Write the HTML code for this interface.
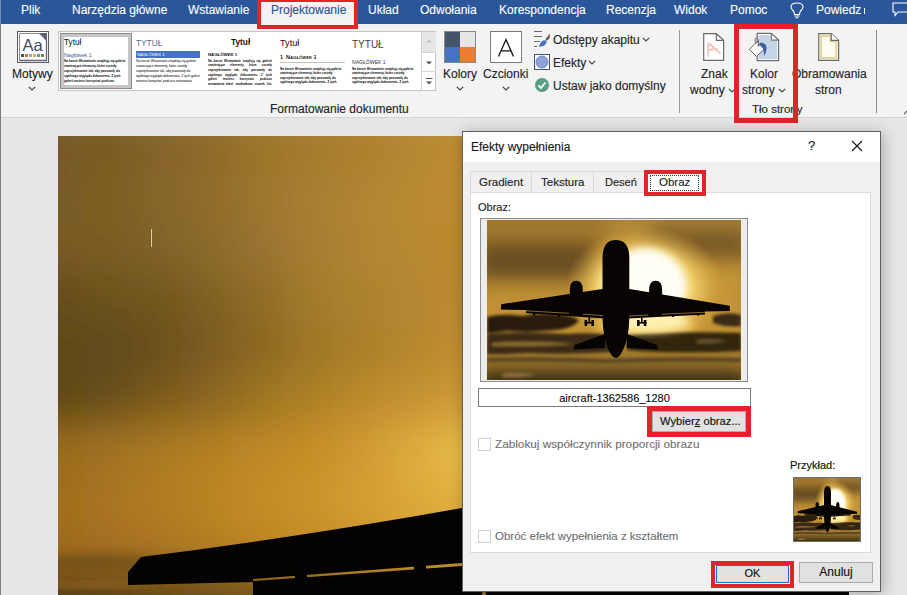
<!DOCTYPE html>
<html><head><meta charset="utf-8">
<style>
*{box-sizing:border-box;margin:0;padding:0}
html,body{width:907px;height:595px;overflow:hidden}
body{position:relative;background:#e6e6e6;font-family:"Liberation Sans",sans-serif;font-size:12px;color:#262626}
.a{position:absolute;white-space:nowrap}
.t{position:absolute;white-space:nowrap;font-size:12px;line-height:14px;-webkit-text-stroke:0.15px currentColor}
#tabs{left:0;top:0;width:907px;height:24px;background:#2b579a}
.tab{position:absolute;top:3px;color:#fff;font-size:12px;line-height:14px;-webkit-text-stroke:0.1px currentColor}
#ribbon{left:0;top:24px;width:907px;height:94px;background:#f3f3f3;border-bottom:1px solid #d4d4d4}
#leftline{left:0;top:0;width:1px;height:595px;background:#7d7d7d}
#page{left:58px;top:136px;width:791px;height:459px;overflow:hidden}
#dlg{left:462px;top:131px;width:419px;height:461px;background:#f0f0f0;border:1px solid #5f5f5f;box-shadow:2px 2px 14px rgba(0,0,0,.28)}
.red{position:absolute;border:5px solid #e0242a}
</style></head><body>
<svg width="0" height="0" style="position:absolute">
<defs>
  <filter id="pb4" x="-30%" y="-30%" width="160%" height="160%"><feGaussianBlur stdDeviation="4"/></filter>
  <filter id="pb2" x="-30%" y="-30%" width="160%" height="160%"><feGaussianBlur stdDeviation="1.6"/></filter>
  <filter id="pb8" x="-30%" y="-30%" width="160%" height="160%"><feGaussianBlur stdDeviation="9"/></filter>
  <radialGradient id="sun" cx="0.5" cy="0.5" r="0.5">
    <stop offset="0" stop-color="#ffffff"/>
    <stop offset="0.35" stop-color="#fff8e0"/>
    <stop offset="0.6" stop-color="#f0cf6a"/>
    <stop offset="1" stop-color="#d8a43a" stop-opacity="0"/>
  </radialGradient>
  <symbol id="photo" viewBox="0 0 254 160" preserveAspectRatio="none">
    <rect width="254" height="160" fill="#a87c2a"/>
    <g filter="url(#pb8)">
      <rect x="-10" y="-10" width="130" height="22" fill="#9c7630"/>
      <rect x="120" y="-10" width="60" height="35" fill="#b08838"/>
      <rect x="170" y="-10" width="90" height="22" fill="#a07c34"/>
      <rect x="160" y="10" width="100" height="30" fill="#7a5a26"/>
      <rect x="-10" y="22" width="120" height="38" fill="#6a5020"/>
      <rect x="-10" y="66" width="110" height="28" fill="#c09034"/>
      <rect x="195" y="45" width="65" height="50" fill="#c49638"/>
      <rect x="-10" y="92" width="270" height="26" fill="#c49436"/>
      <rect x="-10" y="132" width="270" height="14" fill="#a07a32"/>
      <rect x="-10" y="148" width="270" height="24" fill="#2c2010"/>
    </g>
    <ellipse cx="158" cy="68" rx="80" ry="62" fill="url(#sun)"/>
    <ellipse cx="158" cy="66" rx="40" ry="38" fill="#fffef6" filter="url(#pb4)"/>
    <ellipse cx="160" cy="106" rx="50" ry="8" fill="#f0c860" filter="url(#pb4)"/>
    <g filter="url(#pb2)">
      <path d="M0 97 Q15 93 35 96 Q55 92 75 95 Q88 96 92 101 Q86 108 70 110 Q40 113 20 111 Q8 113 0 113Z" fill="#2a1d0c"/>
      <path d="M0 114 Q40 111 80 114 Q110 112 125 116 L125 132 Q80 135 40 133 Q15 135 0 134Z" fill="#3a2a12"/>
      <path d="M140 115 Q190 111 254 113 L254 131 Q200 134 150 131 L140 130Z" fill="#33250f"/>
      <path d="M5 123 Q40 120 90 124 Q50 127 5 126Z" fill="#8a6a30"/>
      <path d="M210 120 Q225 118 240 121 Q225 124 210 123Z" fill="#6a5430"/>
      <path d="M0 138 Q60 136 120 139 Q190 136 254 138 L254 142 Q180 141 120 143 Q60 141 0 142Z" fill="#5a4420"/>
      <path d="M226 96 Q240 91 254 95 L254 106 Q240 108 226 103Z" fill="#3a2a12"/>
      <path d="M15 154 Q30 151 50 155 Q30 158 15 157Z" fill="#8a7040"/>
    </g>
    <ellipse cx="160" cy="101" rx="42" ry="11" fill="#fff0b0" filter="url(#pb4)"/>
    <!-- plane -->
    <g fill="#070403">
      <path d="M115.5 38 Q115.5 20 128.9 20 Q142.3 20 142.3 38 L142.3 98 Q142 118 136 130 Q132.5 137.5 128.9 138 Q125 137.5 121.5 130 Q116 118 115.5 98 Z"/>
      <path d="M117 68.7 L14.2 84.2 L13.8 89.5 L39 90 L39 93 L117 98.5 Z"/>
      <path d="M141 68.7 L242.7 85.7 L243 91 L218 91.5 L218 94.5 L141 98.5 Z"/>
      <path d="M82.8 70 Q82.8 60.8 89.3 60.8 Q95.8 60.8 95.8 70 L95.8 91 L82.8 91 Z"/>
      <path d="M162.1 70 Q162.1 60.8 168.6 60.8 Q175.1 60.8 175.1 70 L175.1 91 L162.1 91 Z"/>
      <path d="M118 114 L87.5 125 L86.8 129.5 L118 128 Z"/>
      <path d="M139.8 114 L170.3 125 L171 129.5 L139.8 128 Z"/>
      <rect x="101.5" y="95" width="1.6" height="8"/><rect x="97.6" y="100" width="2.6" height="6"/><rect x="104.4" y="100" width="2.6" height="6"/><rect x="97.6" y="102" width="9.4" height="1.6"/>
      <rect x="154" y="95" width="1.6" height="8"/><rect x="150" y="100" width="2.6" height="6"/><rect x="156.8" y="100" width="2.6" height="6"/><rect x="150" y="102" width="9.4" height="1.6"/>
      <rect x="46" y="89" width="2.2" height="6.5"/><rect x="71" y="91" width="2.2" height="6"/>
      <rect x="185" y="91" width="2.2" height="6"/><rect x="210" y="89" width="2.2" height="6.5"/>
    </g>
    <path d="M39 90.8 L82 93.3 M96 94.2 L116 95.6 M218 92.3 L175 94.2 M161 95 L142 96" stroke="#b89048" stroke-width="0.7" fill="none"/>
  </symbol>
</defs>
</svg>
<div id="tabs" class="a">
  <span class="tab" style="left:21px">Plik</span>
  <span class="tab" style="left:72px">Narzędzia główne</span>
  <span class="tab" style="left:188px">Wstawianie</span>
  <span class="tab" style="left:368px">Układ</span>
  <span class="tab" style="left:420px">Odwołania</span>
  <span class="tab" style="left:499px">Korespondencja</span>
  <span class="tab" style="left:606px">Recenzja</span>
  <span class="tab" style="left:674px">Widok</span>
  <span class="tab" style="left:730px">Pomoc</span>
  <span class="tab" style="left:816px">Powiedz</span>
</div>
<div id="ribbon" class="a"></div>
<!-- selected tab -->
<div class="a" style="left:258px;top:0;width:100px;height:29px;background:#f3f3f3"></div>
<span class="t" style="left:271px;top:3px;color:#2b579a">Projektowanie</span>
<div class="red" style="left:257px;top:-2px;width:101px;height:31px;border-width:4.5px"></div>
<!-- Motywy -->
<svg class="a" style="left:17px;top:31px" width="32" height="32" viewBox="0 0 32 32">
  <rect x="0.5" y="0.5" width="31" height="31" fill="#fff" stroke="#5c5c5c"/>
  <path d="M2.5 2.5 H22 L29.5 9.5 V29.5 H2.5 Z" fill="#fff" stroke="#8c8c8c"/>
  <path d="M22 2 H30 V10 Z" fill="#5a6078"/>
  <path d="M29.5 9 V29.5 H2.5" fill="none" stroke="#5f6478" stroke-width="1.3"/>
  <text x="5.5" y="20" font-family="Liberation Sans" font-size="16.5" fill="#44495a">Aa</text>
  <rect x="4" y="23" width="3" height="3" fill="#44546a"/><rect x="8" y="23" width="3" height="3" fill="#c57a45"/>
  <rect x="12" y="23" width="3" height="3" fill="#a5a5a5"/><rect x="16" y="23" width="3" height="3" fill="#d4b050"/>
  <rect x="20" y="23" width="3" height="3" fill="#6f8fc0"/><rect x="24" y="23" width="3" height="3" fill="#6b8a50"/>
</svg>
<span class="t" style="left:12px;top:67px">Motywy</span>
<svg class="a" style="left:28px;top:86px" width="8" height="5"><path d="M0.8 0.8 L4 4 L7.2 0.8" fill="none" stroke="#444" stroke-width="1.2"/></svg>
<!-- gallery -->
<div class="a" style="left:58px;top:31px;width:378px;height:60px;background:#fff;border:1px solid #c6c6c6"></div>
<div class="a" style="left:60px;top:33px;width:72px;height:56px;border:1px solid #8a8a8a;background:#fff"></div>
<div class="a" style="left:61px;top:34px;width:70px;height:54px;border:3px solid #c6c6c6"></div>
<div class="a" style="left:421px;top:32px;width:15px;height:20px;background:#e6e6e6;border-left:1px solid #d6d6d6"></div>
<div class="a" style="left:421px;top:52px;width:15px;height:38px;border-left:1px solid #d6d6d6"></div>
<div class="a" style="left:421px;top:71px;width:15px;height:1px;background:#d6d6d6"></div>
<div class="a" style="left:421px;top:52px;width:15px;height:1px;background:#d6d6d6"></div>
<svg class="a" style="left:425px;top:38px" width="8" height="6"><path d="M1 4.5 L4 1.5 L7 4.5Z" fill="#c4c4c4"/></svg>
<svg class="a" style="left:425px;top:60px" width="8" height="6"><path d="M1 1.5 L4 4.5 L7 1.5Z" fill="#555"/></svg>
<svg class="a" style="left:425px;top:77px" width="8" height="10"><rect x="0.5" y="1" width="7" height="1" fill="#555"/><path d="M1 4.5 L4 7.5 L7 4.5Z" fill="#555"/></svg>

<span class="a" style="left:64px;top:38.5px;font-size:8.2px;line-height:8.2px;color:#111">Tytuł</span>
<span class="a" style="left:64px;top:52.5px;font-size:5.3px;line-height:5.3px;color:#3c5a8c">Nagłówek 1</span>
<div class="a" style="left:64px;top:59px;width:63px;height:25px;overflow:hidden;white-space:normal;font-size:3.3px;line-height:4.9px;font-weight:bold;letter-spacing:-0.08px;color:#111;">Na karcie Wstawianie znajdują się galerie zawierające elementy, które zostały zaprojektowane tak, aby pasowały do ogólnego wyglądu dokumentu. Z tych galerii możesz korzystać podczas wstawiania tabel, nagłówków, stopek, list, stron tytułowych</div>
<span class="a" style="left:136px;top:39px;font-size:8.3px;line-height:8.3px;color:#5a6a88">TYTUŁ</span>
<div class="a" style="left:136px;top:51px;width:64px;height:7px;background:#4472c4"></div>
<span class="a" style="left:137px;top:52.5px;font-size:4.2px;line-height:4.2px;color:#fff">NAGŁÓWEK 1</span>
<div class="a" style="left:136px;top:59px;width:64px;height:25px;overflow:hidden;white-space:normal;font-size:3.4px;line-height:4.9px;font-weight:normal;letter-spacing:-0.06px;color:#000;">Na karcie Wstawianie znajdują się galerie zawierające elementy, które zostały zaprojektowane tak, aby pasowały do ogólnego wyglądu dokumentu. Z tych galerii możesz korzystać podczas wstawiania tabel, nagłówków, stopek, list, stron tytułowych</div>
<span class="a" style="left:231px;top:38px;font-size:8.3px;line-height:8.3px;font-weight:bold;color:#111">Tytuł</span>
<span class="a" style="left:208px;top:53px;font-size:4.3px;line-height:4.3px;font-weight:bold;color:#111">NAGŁÓWEK 1</span>
<div class="a" style="left:208px;top:58.5px;width:64px;height:26px;overflow:hidden;white-space:normal;font-size:3.2px;line-height:4.7px;font-weight:bold;letter-spacing:-0.06px;color:#111;text-align:justify;">Na karcie Wstawianie znajdują się galerie zawierające elementy, które zostały zaprojektowane tak, aby pasowały do ogólnego wyglądu dokumentu. Z tych galerii możesz korzystać podczas wstawiania tabel, nagłówków, stopek, list, stron tytułowych</div>
<span class="a" style="left:280px;top:38.5px;font-size:9.2px;line-height:9.2px;color:#111">Tytuł</span>
<span class="a" style="left:280px;top:55px;font-size:5.5px;line-height:5.5px;font-weight:bold;color:#222">1&nbsp;&nbsp;N<span style="font-size:4.2px">AGŁÓWEK</span> 1</span>
<div class="a" style="left:280px;top:62px;width:65px;height:1px;background:#c0c0c0"></div>
<div class="a" style="left:280px;top:66.5px;width:64px;height:18px;overflow:hidden;white-space:normal;font-size:3.3px;line-height:4.6px;font-weight:bold;letter-spacing:-0.08px;color:#111;">Na karcie Wstawianie znajdują się galerie zawierające elementy, które zostały zaprojektowane tak, aby pasowały do ogólnego wyglądu dokumentu. Z tych galerii możesz korzystać podczas wstawiania tabel, nagłówków, stopek, list, stron tytułowych</div>
<span class="a" style="left:352px;top:39.5px;font-size:10px;line-height:10px;color:#404040">TYTUŁ</span>
<span class="a" style="left:352px;top:60px;font-size:5.1px;line-height:5.1px;color:#333">NAGŁÓWEK 1</span>
<div class="a" style="left:352px;top:66.5px;width:63px;height:18.4px;overflow:hidden;white-space:normal;font-size:3.3px;line-height:4.6px;font-weight:bold;letter-spacing:-0.08px;color:#111;">Na karcie Wstawianie znajdują się galerie zawierające elementy, które zostały zaprojektowane tak, aby pasowały do ogólnego wyglądu dokumentu. Z tych galerii możesz korzystać podczas wstawiania tabel, nagłówków, stopek, list, stron tytułowych</div>

<span class="t" style="left:270px;top:102px">Formatowanie dokumentu</span>
<!-- Kolory -->
<svg class="a" style="left:444px;top:31px" width="32" height="32" viewBox="0 0 32 32">
  <rect x="0" y="0" width="16" height="16" fill="#44546a"/><rect x="16" y="0" width="16" height="16" fill="#e7e6e6"/>
  <rect x="0" y="16" width="16" height="16" fill="#4472c4"/><rect x="16" y="16" width="16" height="16" fill="#ed7d31"/>
  <rect x="0.5" y="0.5" width="31" height="31" fill="none" stroke="#8a8a8a"/>
</svg>
<span class="t" style="left:443px;top:67px">Kolory</span>
<svg class="a" style="left:456px;top:86px" width="8" height="5"><path d="M0.8 0.8 L4 4 L7.2 0.8" fill="none" stroke="#444" stroke-width="1.2"/></svg>
<!-- Czcionki -->
<div class="a" style="left:490px;top:31px;width:32px;height:32px;background:#fff;border:1px solid #7a7a7a"></div>
<svg class="a" style="left:490px;top:31px" width="32" height="32" viewBox="0 0 32 32"><path d="M8.5 25.5 L16 8.5 L23.5 25.5 M11 19.8 H21" fill="none" stroke="#111" stroke-width="1.3"/></svg>
<span class="t" style="left:483px;top:67px">Czcionki</span>
<svg class="a" style="left:502px;top:86px" width="8" height="5"><path d="M0.8 0.8 L4 4 L7.2 0.8" fill="none" stroke="#444" stroke-width="1.2"/></svg>
<!-- Odstepy / Efekty / Ustaw -->
<svg class="a" style="left:533px;top:29px" width="18" height="20" viewBox="0 0 18 20">
  <rect x="1" y="2" width="8" height="1" fill="#6a6a6a"/><rect x="1" y="7" width="8" height="1" fill="#6a6a6a"/>
  <rect x="1" y="12" width="6" height="1" fill="#6a6a6a"/><rect x="1" y="17" width="3" height="1" fill="#6a6a6a"/>
  <path d="M12.5 10 L17 4.5 L16.5 9.5 L13.5 12 Z" fill="#5e5e5e"/>
  <path d="M6 18 Q7 13 10 11.5 Q13 10.5 13.5 12.5 Q13.5 15.5 10 17 Z" fill="#4a6fc0"/>
</svg>
<span class="t" style="left:553px;top:33px">Odstępy akapitu</span>
<svg class="a" style="left:642px;top:37px" width="8" height="5"><path d="M0.8 0.8 L4 4 L7.2 0.8" fill="none" stroke="#444" stroke-width="1.2"/></svg>
<svg class="a" style="left:534px;top:54px" width="16" height="16" viewBox="0 0 16 16">
  <rect x="0.5" y="0.5" width="15" height="15" fill="#fff" stroke="#44546a"/>
  <circle cx="8" cy="8" r="6" fill="#8fa3d8" stroke="#5a78c0" stroke-width="0.8"/>
</svg>
<span class="t" style="left:553px;top:56px">Efekty</span>
<svg class="a" style="left:588px;top:60px" width="8" height="5"><path d="M0.8 0.8 L4 4 L7.2 0.8" fill="none" stroke="#444" stroke-width="1.2"/></svg>
<svg class="a" style="left:534px;top:77px" width="16" height="16" viewBox="0 0 16 16">
  <circle cx="8" cy="8" r="7" fill="#5a9e83"/>
  <path d="M4.5 8.5 L7 11 L11.5 5.5" fill="none" stroke="#fff" stroke-width="1.8"/>
</svg>
<span class="t" style="left:553px;top:79px">Ustaw jako domyślny</span>
<div class="a" style="left:679px;top:30px;width:1px;height:83px;background:#9a9a9a"></div>
<!-- Znak wodny -->
<svg class="a" style="left:703px;top:33px" width="22" height="28" viewBox="0 0 22 28">
  <path d="M0.7 0.7 H13.3 L20.6 7.3 V27.3 H0.7 Z" fill="#fff" stroke="#6a6a6a" stroke-width="1.2"/>
  <path d="M13.3 0.7 V7.3 H20.6" fill="none" stroke="#6a6a6a" stroke-width="1.2"/>
  <path d="M5.5 23 Q4.5 15 5.5 11 L6 10.5 Q11 15 17 20 M6 17 Q10 16 14 16" fill="none" stroke="#efc6bc" stroke-width="1.9" stroke-linecap="round"/>
</svg>
<span class="t" style="left:701px;top:67px">Znak</span>
<span class="t" style="left:690px;top:83px">wodny</span>
<svg class="a" style="left:728px;top:87.5px" width="8" height="5"><path d="M0.8 0.8 L4 4 L7.2 0.8" fill="none" stroke="#444" stroke-width="1.2"/></svg>
<!-- Kolor strony -->
<svg class="a" style="left:748px;top:32px" width="32" height="30" viewBox="0 0 32 30">
  <path d="M9.2 1.4 H23.3 L30.6 8.1 V28.6 H9.2 Z" fill="#fff" stroke="#6f6f6f" stroke-width="1.2"/>
  <path d="M10.5 3 H22.5 V9 H29.2 V27.3 H10.5Z" fill="#c5d5e5"/>
  <path d="M23.3 1.4 V8.1 H30.6" fill="none" stroke="#6f6f6f" stroke-width="1.2"/>
  <path d="M1.3 17.4 L8.9 9.7 L16.3 17.1 L8.6 24.4 Z" fill="#fff" stroke="#666" stroke-width="1"/>
  <path d="M8 12 Q6 6 8.5 6 Q11 6 10.5 13" fill="none" stroke="#666" stroke-width="1"/>
  <circle cx="10.5" cy="13.5" r="1.1" fill="#666"/>
  <path d="M12.5 10.5 Q19 11 18.5 17 Q18 21.5 16 24 Q16 19.5 15 16.5 Q14 14 11.5 12.5 Z" fill="#3b5ea8"/>
</svg>
<span class="t" style="left:750px;top:67px">Kolor</span>
<span class="t" style="left:742px;top:83px">strony</span>
<svg class="a" style="left:778px;top:87.5px" width="8" height="5"><path d="M0.8 0.8 L4 4 L7.2 0.8" fill="none" stroke="#444" stroke-width="1.2"/></svg>
<!-- Obramowania -->
<svg class="a" style="left:818px;top:33px" width="22" height="28" viewBox="0 0 22 28">
  <path d="M0.7 0.7 H13.3 L20.6 7.3 V27.3 H0.7 Z" fill="#fffdf2" stroke="#6e6a60" stroke-width="1.2"/>
  <path d="M3 3 H12.5 V8.5 H18.3 V25 H3 Z" fill="none" stroke="#e4d4a4" stroke-width="2"/>
  <path d="M13.3 0.7 V7.3 H20.6" fill="#fff" stroke="#6e6a60" stroke-width="1.2"/>
</svg>
<span class="t" style="left:792px;top:67px">Obramowania</span>
<span class="t" style="left:815px;top:83px">stron</span>
<span class="t" style="left:752px;top:102px;font-size:11.5px">Tło strony</span>
<div class="a" style="left:876px;top:30px;width:1px;height:83px;background:#8a8a8a"></div>
<svg class="a" style="left:904px;top:109px" width="8" height="6"><path d="M0 5 L3.5 1.5 L7 5" fill="none" stroke="#555" stroke-width="1.2"/></svg>
<div class="red" style="left:734px;top:24px;width:64px;height:99px;border-width:5px"></div>
<!-- tab bar icons -->
<svg class="a" style="left:790px;top:2px" width="14" height="17" viewBox="0 0 14 17">
  <path d="M4.5 12.5 Q4.5 10 3 8.5 Q1 6.5 1 5 Q1 1 7 1 Q13 1 13 5 Q13 6.5 11 8.5 Q9.5 10 9.5 12.5 Z" fill="none" stroke="#fff" stroke-width="1.1"/>
  <path d="M4.5 14 H9.5 M5.5 15.8 H8.5" stroke="#fff" stroke-width="1.1"/>
</svg>
<div class="a" style="left:864px;top:8px;width:1.4px;height:6px;background:#fff"></div>
<svg class="a" style="left:892px;top:2px" width="15" height="15" viewBox="0 0 15 15">
  <path d="M1 1 H16 V10 H6 L3 13.5 V10 H1 Z" fill="none" stroke="#fff" stroke-width="1.1"/>
</svg>


<!-- page photo -->
<div id="page" class="a">
<svg width="791" height="459" viewBox="58 136 791 459" style="display:block">
  <defs>
    <filter id="bl20" x="-20%" y="-20%" width="140%" height="140%"><feGaussianBlur stdDeviation="20"/></filter>
  </defs>
  <g filter="url(#bl20)">
<rect x="0" y="100" width="83" height="75" fill="#765826"/>
<rect x="83" y="100" width="50" height="75" fill="#7a5c24"/>
<rect x="133" y="100" width="50" height="75" fill="#84632a"/>
<rect x="183" y="100" width="50" height="75" fill="#8e6b2c"/>
<rect x="233" y="100" width="50" height="75" fill="#9a742c"/>
<rect x="283" y="100" width="50" height="75" fill="#a47a2e"/>
<rect x="333" y="100" width="50" height="75" fill="#ac802f"/>
<rect x="383" y="100" width="52" height="75" fill="#b48632"/>
<rect x="435" y="100" width="85" height="75" fill="#bc8c32"/>
<rect x="0" y="175" width="83" height="50" fill="#7a5b26"/>
<rect x="83" y="175" width="50" height="50" fill="#7e5e24"/>
<rect x="133" y="175" width="50" height="50" fill="#86652a"/>
<rect x="183" y="175" width="50" height="50" fill="#8e6c2c"/>
<rect x="233" y="175" width="50" height="50" fill="#9c762e"/>
<rect x="283" y="175" width="50" height="50" fill="#a87e30"/>
<rect x="333" y="175" width="50" height="50" fill="#b08430"/>
<rect x="383" y="175" width="52" height="50" fill="#b88a32"/>
<rect x="435" y="175" width="85" height="50" fill="#bc8c32"/>
<rect x="0" y="225" width="83" height="50" fill="#785a20"/>
<rect x="83" y="225" width="50" height="50" fill="#7a5c22"/>
<rect x="133" y="225" width="50" height="50" fill="#80622a"/>
<rect x="183" y="225" width="50" height="50" fill="#8a6a2a"/>
<rect x="233" y="225" width="50" height="50" fill="#987230"/>
<rect x="283" y="225" width="50" height="50" fill="#a67c30"/>
<rect x="333" y="225" width="50" height="50" fill="#b08430"/>
<rect x="383" y="225" width="52" height="50" fill="#b88832"/>
<rect x="435" y="225" width="85" height="50" fill="#b8882e"/>
<rect x="0" y="275" width="83" height="50" fill="#664c1a"/>
<rect x="83" y="275" width="50" height="50" fill="#6a521e"/>
<rect x="133" y="275" width="50" height="50" fill="#71551c"/>
<rect x="183" y="275" width="50" height="50" fill="#7e6024"/>
<rect x="233" y="275" width="50" height="50" fill="#8e6a26"/>
<rect x="283" y="275" width="50" height="50" fill="#a07a2c"/>
<rect x="333" y="275" width="50" height="50" fill="#ac822e"/>
<rect x="383" y="275" width="52" height="50" fill="#b48630"/>
<rect x="435" y="275" width="85" height="50" fill="#bc8a30"/>
<rect x="0" y="325" width="83" height="50" fill="#5e4818"/>
<rect x="83" y="325" width="50" height="50" fill="#60481a"/>
<rect x="133" y="325" width="50" height="50" fill="#6a501c"/>
<rect x="183" y="325" width="50" height="50" fill="#7a5a20"/>
<rect x="233" y="325" width="50" height="50" fill="#8a6622"/>
<rect x="283" y="325" width="50" height="50" fill="#9c7428"/>
<rect x="333" y="325" width="50" height="50" fill="#aa7e2c"/>
<rect x="383" y="325" width="52" height="50" fill="#b4862e"/>
<rect x="435" y="325" width="85" height="50" fill="#c08e30"/>
<rect x="0" y="375" width="83" height="50" fill="#5e4616"/>
<rect x="83" y="375" width="50" height="50" fill="#68501a"/>
<rect x="133" y="375" width="50" height="50" fill="#7a5a1c"/>
<rect x="183" y="375" width="50" height="50" fill="#8a6620"/>
<rect x="233" y="375" width="50" height="50" fill="#9c7424"/>
<rect x="283" y="375" width="50" height="50" fill="#ac8026"/>
<rect x="333" y="375" width="50" height="50" fill="#ba8a2a"/>
<rect x="383" y="375" width="52" height="50" fill="#c49230"/>
<rect x="435" y="375" width="85" height="50" fill="#cc9a36"/>
<rect x="0" y="425" width="83" height="50" fill="#9a6c1c"/>
<rect x="83" y="425" width="50" height="50" fill="#a27220"/>
<rect x="133" y="425" width="50" height="50" fill="#aa7a22"/>
<rect x="183" y="425" width="50" height="50" fill="#b48024"/>
<rect x="233" y="425" width="50" height="50" fill="#be8826"/>
<rect x="283" y="425" width="50" height="50" fill="#c68e28"/>
<rect x="333" y="425" width="50" height="50" fill="#d09830"/>
<rect x="383" y="425" width="52" height="50" fill="#dcaa3c"/>
<rect x="435" y="425" width="85" height="50" fill="#e8bc4c"/>
<rect x="0" y="475" width="83" height="50" fill="#a06e1e"/>
<rect x="83" y="475" width="50" height="50" fill="#a87420"/>
<rect x="133" y="475" width="50" height="50" fill="#b07c22"/>
<rect x="183" y="475" width="50" height="50" fill="#ba8424"/>
<rect x="233" y="475" width="50" height="50" fill="#c48c26"/>
<rect x="283" y="475" width="50" height="50" fill="#cc922a"/>
<rect x="333" y="475" width="50" height="50" fill="#d49c30"/>
<rect x="383" y="475" width="52" height="50" fill="#dca838"/>
<rect x="435" y="475" width="85" height="50" fill="#e0b040"/>
<rect x="0" y="525" width="83" height="47" fill="#a06c1c"/>
<rect x="83" y="525" width="50" height="47" fill="#a47020"/>
<rect x="133" y="525" width="50" height="47" fill="#aa7620"/>
<rect x="183" y="525" width="50" height="47" fill="#b27e22"/>
<rect x="233" y="525" width="50" height="47" fill="#ba8624"/>
<rect x="283" y="525" width="50" height="47" fill="#c28c28"/>
<rect x="333" y="525" width="50" height="47" fill="#ca942c"/>
<rect x="383" y="525" width="52" height="47" fill="#d09c32"/>
<rect x="435" y="525" width="85" height="47" fill="#d4a036"/>
<rect x="0" y="572" width="83" height="68" fill="#503a16"/>
<rect x="83" y="572" width="50" height="68" fill="#563e18"/>
<rect x="133" y="572" width="50" height="68" fill="#5e4418"/>
<rect x="183" y="572" width="50" height="68" fill="#664a1a"/>
<rect x="233" y="572" width="50" height="68" fill="#6e501c"/>
<rect x="283" y="572" width="50" height="68" fill="#76561e"/>
<rect x="333" y="572" width="50" height="68" fill="#7e5c20"/>
<rect x="383" y="572" width="52" height="68" fill="#866222"/>
<rect x="435" y="572" width="85" height="68" fill="#8a6622"/>
  </g>
  <filter id="bl4" x="-50%" y="-50%" width="200%" height="200%"><feGaussianBlur stdDeviation="4"/></filter>
  <ellipse cx="92" cy="563" rx="70" ry="9" fill="#6e5018" opacity="0.75" filter="url(#bl4)"/>
  <ellipse cx="95" cy="585" rx="60" ry="2.5" fill="#9a7026" opacity="0.8" filter="url(#bl4)"/>
  <rect x="150" y="229" width="1" height="18" fill="#6a5828" opacity="0.6"/>
  <rect x="151" y="229" width="1" height="18" fill="#d8d0b0"/>
  <!-- wing -->
  <path d="M128 572 L128 585 L253 582 L253 579 L462 563 L462 508 Q300 537 141 557 Z" fill="#050302"/>
  <path d="M253 581 L462 566 L849 540 L849 600 L253 600 Z" fill="#050302"/>
  <path d="M480 600 L484 588 L488 600Z" fill="#a07a30"/>
  <rect x="295" y="574" width="12" height="10" fill="#050302"/>
  <rect x="414" y="562" width="12" height="10" fill="#050302"/>
</svg>
</div>

<div id="dlg" class="a"></div>
<div class="a" style="left:463px;top:132px;width:417px;height:30px;background:#fff"></div>
<span class="t" style="left:471px;top:140px;color:#1a1a1a">Efekty wypełnienia</span>
<span class="t" style="left:808px;top:139px;font-size:13px;color:#1a1a1a">?</span>
<svg class="a" style="left:851px;top:140px" width="12" height="12" viewBox="0 0 12 12"><path d="M1 1L11 11M11 1L1 11" stroke="#1a1a1a" stroke-width="1.2"/></svg>
<!-- tabs -->
<div class="a" style="left:470px;top:171px;width:176px;height:22px;border:1px solid #dadada;border-bottom:none;background:#f0f0f0"></div>
<div class="a" style="left:531px;top:172px;width:1px;height:20px;background:#dadada"></div>
<div class="a" style="left:593px;top:172px;width:1px;height:20px;background:#dadada"></div>
<span class="t" style="left:479px;top:175px;font-size:11.5px">Gradient</span>
<span class="t" style="left:541px;top:175px;font-size:11.5px">Tekstura</span>
<span class="t" style="left:605px;top:175px;font-size:11px">Deseń</span>
<!-- panel -->
<div class="a" style="left:470px;top:192px;width:401px;height:361px;background:#fff;border:1px solid #dadada"></div>
<div class="a" style="left:648px;top:174px;width:54px;height:20px;background:#fff"></div>
<div class="a" style="left:650px;top:175px;width:49px;height:16px;border:1px dotted #333"></div>
<span class="t" style="left:659px;top:175px;font-size:11.5px">Obraz</span>
<div class="red" style="left:644px;top:170px;width:62px;height:26px;border-width:4px"></div>
<span class="t" style="left:478px;top:200px;font-size:11px">Obraz:</span>
<!-- preview -->
<div class="a" style="left:480px;top:218px;width:268px;height:164px;border:1px solid #8e8e8e;background:#ececec"></div>
<svg class="a" style="left:487px;top:220px" width="254" height="160"><use href="#photo" width="254" height="160"/></svg>
<!-- filename -->
<div class="a" style="left:478px;top:388px;width:273px;height:19px;border:1px solid #7a7a7a;background:#fff"></div>
<span class="t" style="left:478px;top:391px;width:273px;text-align:center;font-size:11px;color:#111">aircraft-1362586_1280</span>
<!-- wybierz -->
<div class="a" style="left:652px;top:411px;width:94px;height:21px;background:#e1e1e1;border:1px solid #adadad"></div>
<span class="t" style="left:660px;top:414px;font-size:11.2px;color:#111">Wybier<u>z</u> obraz...</span>
<div class="red" style="left:647px;top:406px;width:104px;height:31px;border-width:5px"></div>
<!-- checkbox 1 -->
<div class="a" style="left:478px;top:438px;width:13px;height:13px;border:1px solid #cfcfcf;background:#fff"></div>
<span class="t" style="left:495px;top:437px;font-size:11.75px;color:#737373">Zablokuj współczynnik proporcji obrazu</span>
<!-- przyklad -->
<span class="t" style="left:790px;top:458px;font-size:11px;color:#111">Przykład:</span>
<div class="a" style="left:793px;top:477px;width:68px;height:65px;border:1px solid #6e6e6e;background:#222"></div>
<svg class="a" style="left:794px;top:478px" width="66" height="63"><use href="#photo" width="66" height="63"/></svg>
<!-- checkbox 2 -->
<div class="a" style="left:478px;top:530px;width:13px;height:13px;border:1px solid #cfcfcf;background:#fff"></div>
<span class="t" style="left:495px;top:529px;font-size:11.5px;color:#737373">Obróć efekt wypełnienia z kształtem</span>
<!-- buttons -->
<div class="a" style="left:716px;top:565px;width:73px;height:18px;background:#e1e1e1;border:1px solid #0078d7"></div>
<span class="t" style="left:716px;top:566px;width:73px;text-align:center;font-size:11px;color:#111">OK</span>
<div class="red" style="left:711px;top:561px;width:83px;height:27px;border-width:4px"></div>
<div class="a" style="left:799px;top:562px;width:74px;height:21px;background:#e1e1e1;border:1px solid #adadad"></div>
<span class="t" style="left:799px;top:565px;width:74px;text-align:center;font-size:12px;color:#111">Anuluj</span>

<div id="leftline" class="a"></div>
<div class="a" style="left:0;top:0;width:1px;height:24px;background:#6f8db5"></div>
</body></html>
